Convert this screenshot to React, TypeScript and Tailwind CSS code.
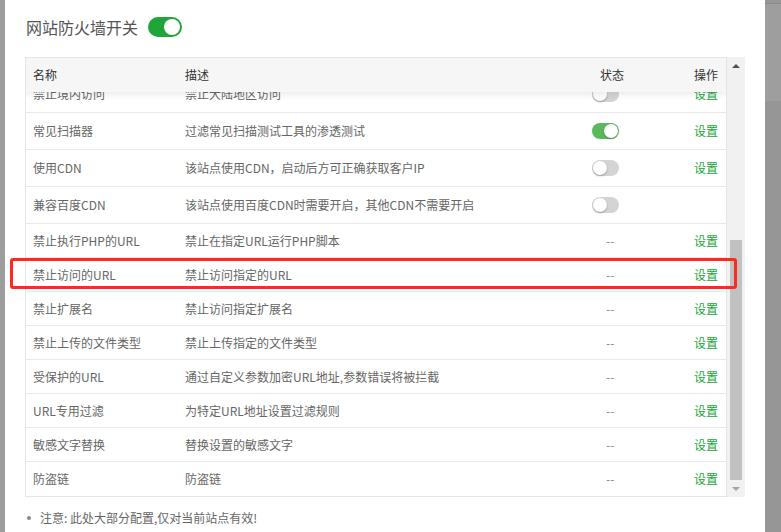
import React from 'react';

type Row = {
  name: string;
  desc: string;
  status: 'on' | 'off' | 'none';
  action: boolean;
};

const ROWS: Row[] = [
  { name: '禁止境内访问', desc: '禁止大陆地区访问', status: 'off', action: true },
  { name: '常见扫描器', desc: '过滤常见扫描测试工具的渗透测试', status: 'on', action: true },
  { name: '使用CDN', desc: '该站点使用CDN，启动后方可正确获取客户IP', status: 'off', action: true },
  { name: '兼容百度CDN', desc: '该站点使用百度CDN时需要开启，其他CDN不需要开启', status: 'off', action: false },
  { name: '禁止执行PHP的URL', desc: '禁止在指定URL运行PHP脚本', status: 'none', action: true },
  { name: '禁止访问的URL', desc: '禁止访问指定的URL', status: 'none', action: true },
  { name: '禁止扩展名', desc: '禁止访问指定扩展名', status: 'none', action: true },
  { name: '禁止上传的文件类型', desc: '禁止上传指定的文件类型', status: 'none', action: true },
  { name: '受保护的URL', desc: '通过自定义参数加密URL地址,参数错误将被拦截', status: 'none', action: true },
  { name: 'URL专用过滤', desc: '为特定URL地址设置过滤规则', status: 'none', action: true },
  { name: '敏感文字替换', desc: '替换设置的敏感文字', status: 'none', action: true },
  { name: '防盗链', desc: '防盗链', status: 'none', action: true },
];

function SmallSwitch({ on }: { on: boolean }) {
  return (
    <div
      className={`relative w-[27px] h-[16px] rounded-full ${on ? 'bg-[#5cb85c]' : 'bg-[#d4d4d4]'}`}
    >
      <div
        className={`absolute top-[1px] w-[14px] h-[14px] rounded-full bg-white shadow-[0_1px_2px_rgba(0,0,0,0.3)] ${on ? 'right-[1px]' : 'left-[1px]'}`}
      />
    </div>
  );
}

export default function App() {
  return (
    <div className="flex h-[532px] w-[781px] overflow-hidden font-['Noto_Sans_CJK_SC',sans-serif] text-[12px] text-[#666]">
      {/* left page edge */}
      <div className="w-[5px] bg-[#9d9d9d]" />

      {/* dialog body */}
      <div className="relative flex-1 bg-white pl-[20px] pr-[20px] pt-[17px]">
        <div className="flex items-center h-[20px]">
          <span className="text-[16px] text-[#555] leading-[20px] ml-[1px]">网站防火墙开关</span>
          <div className="relative ml-[10px] w-[34px] h-[20px] rounded-full bg-[#20a53a]">
            <div className="absolute right-[2px] top-[2px] w-[16px] h-[16px] rounded-full bg-white" />
          </div>
        </div>

        <div className="mt-[20px] flex h-[440px]">
          {/* table */}
          <div className="flex-1 flex flex-col border border-[#e5e5e5] overflow-hidden">
            <div className="relative z-10 grid grid-cols-[152px_383px_100px_1fr] h-[34px] items-center bg-[#f6f6f6] text-[#333] shadow-[0_3px_6px_rgba(0,0,0,0.08)]">
              <span className="pl-[7px]">名称</span>
              <span className="pl-[7px]">描述</span>
              <span className="pl-[39px]">状态</span>
              <span className="text-right pr-[8px]">操作</span>
            </div>
            <div className="flex-1 overflow-hidden">
              <div className="-mt-[16px]">
                {ROWS.map((r) => (
                  <div
                    key={r.name}
                    className={`grid grid-cols-[152px_383px_100px_1fr] items-center border-b border-[#eaeaea] last:border-b-0 ${r.status === 'none' ? 'h-[34px]' : 'h-[37px]'}`}
                  >
                    <span className="pl-[7px]">{r.name}</span>
                    <span className="pl-[7px]">{r.desc}</span>
                    <div className="flex">
                      {r.status === 'none' ? (
                        <span className="pl-[45px] text-[#888]">--</span>
                      ) : (
                        <div className="pl-[31px]">
                          <SmallSwitch on={r.status === 'on'} />
                        </div>
                      )}
                    </div>
                    <span className="text-right pr-[8px] text-[#20a53a]">{r.action ? '设置' : ''}</span>
                  </div>
                ))}
              </div>
            </div>
          </div>

          {/* scrollbar */}
          <div className="w-[18px] flex flex-col bg-[#f1f1f1]">
            <div className="h-[17px] flex items-center justify-center">
              <div className="w-0 h-0 border-l-[4px] border-r-[4px] border-b-[4px] border-l-transparent border-r-transparent border-b-[#505050]" />
            </div>
            <div className="h-[166px]" />
            <div className="mx-[3px] h-[240px] bg-[#c1c1c1]" />
            <div className="flex-1 flex items-center justify-center">
              <div className="w-0 h-0 border-l-[4px] border-r-[4px] border-t-[4px] border-l-transparent border-r-transparent border-t-[#a3a3a3]" />
            </div>
          </div>
        </div>

        <div className="mt-[13px] flex items-center h-[16px] pl-[2px]">
          <span className="w-[4px] h-[4px] rounded-full bg-[#888]" />
          <span className="ml-[9px]">注意: 此处大部分配置,仅对当前站点有效!</span>
        </div>

        {/* highlight box */}
        <div className="absolute left-[5px] top-[258px] w-[727px] h-[31px] border-[3px] border-[#ff2a1a] rounded-[3px]" />
      </div>

      {/* right page edge */}
      <div className="w-[16px] flex flex-col bg-[#969696]">
        <div className="h-[98px] bg-[#9e9e9e] border-t-[1px] border-[#8a8a8a] mt-[3px]" />
      </div>
    </div>
  );
}
